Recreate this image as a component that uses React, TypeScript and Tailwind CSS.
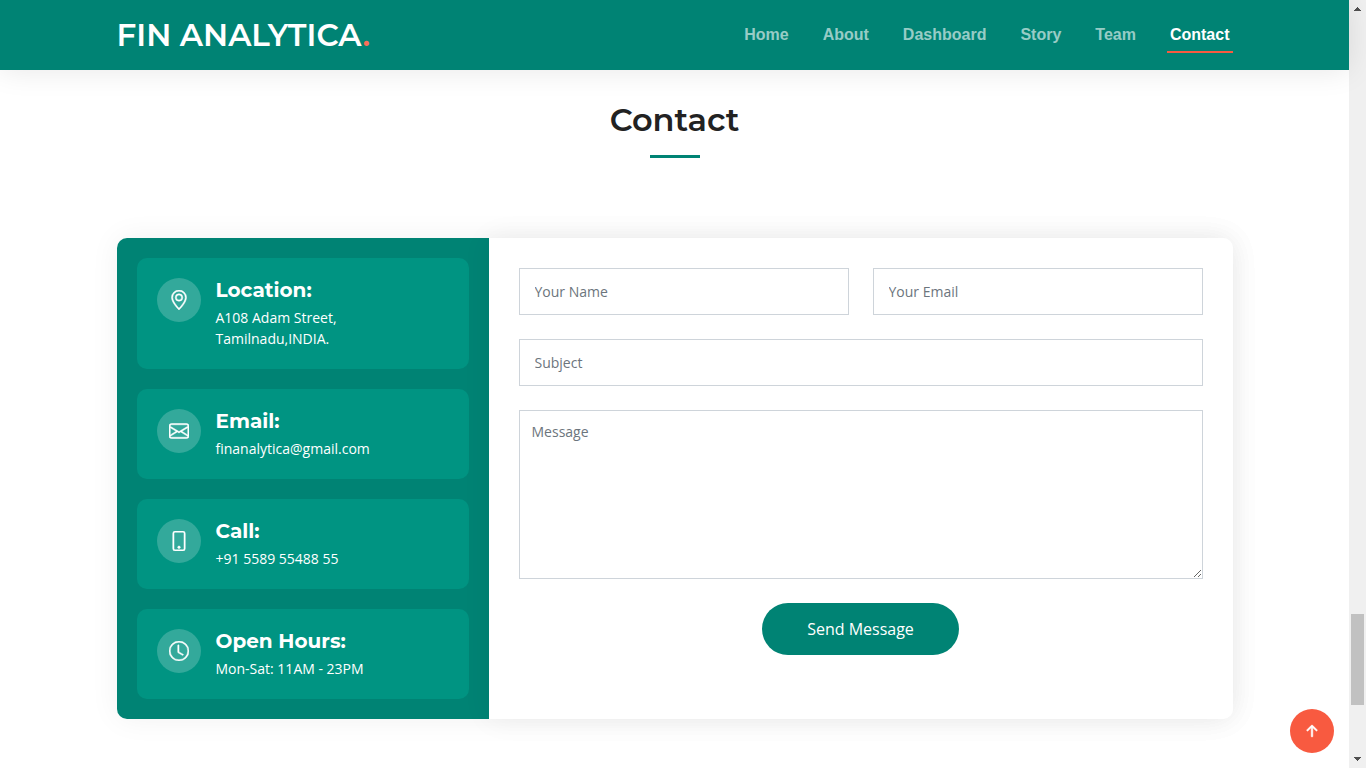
import type { ReactNode } from "react";
import { BsArrowUpShort, BsClock, BsEnvelope, BsGeoAlt, BsPhone } from "react-icons/bs";

const navItems = ["Home", "About", "Dashboard", "Story", "Team", "Contact"];

const headingFont = "font-['Montserrat','Inter',sans-serif]";

function Header() {
  return (
    <header className="relative z-10 h-[70px] shrink-0 bg-[#008374] shadow-[0_0_30px_rgba(0,0,0,0.1)]">
      <div className="mx-auto flex h-full max-w-[1140px] items-center justify-between px-3">
        <a href="#home" className={`${headingFont} text-[31px] leading-9 font-semibold text-white`}>
          FIN ANALYTICA<span className="text-[#f96f59]">.</span>
        </a>
        <nav aria-label="Main">
          <ul className="flex gap-7 font-['Liberation_Sans',Arial,sans-serif] text-base font-bold">
            {navItems.map((item) => (
              <li key={item}>
                <a
                  href={`#${item.toLowerCase()}`}
                  aria-current={item === "Contact" ? "page" : undefined}
                  className="block border-b-2 border-transparent px-[3px] pt-1.5 pb-1 text-white/60 aria-[current=page]:border-[#f85a40] aria-[current=page]:text-white"
                >
                  {item}
                </a>
              </li>
            ))}
          </ul>
        </nav>
      </div>
    </header>
  );
}

function InfoItem({ icon, title, children }: { icon: ReactNode; title: string; children: ReactNode }) {
  return (
    <div className="flex gap-[15px] rounded-[10px] bg-[#009482] p-5 text-white">
      <div className="flex size-11 shrink-0 items-center justify-center rounded-full bg-white/20 text-xl [&>svg]:stroke-[0.4]">
        {icon}
      </div>
      <div>
        <h3 className={`${headingFont} mb-[5px] text-xl leading-6 font-bold`}>{title}</h3>
        <p className="text-sm leading-[21px]">{children}</p>
      </div>
    </div>
  );
}

const fieldStyle =
  "block w-full border border-[#ced4da] bg-white text-sm leading-[21px] text-[#212529] outline-none placeholder:text-[#6c757d] focus:border-[#008374]";

function ContactForm() {
  return (
    <form
      className="w-2/3 rounded-r-[10px] bg-white p-[30px] shadow-[0_0_30px_rgba(0,0,0,0.06)]"
      onSubmit={(event) => event.preventDefault()}
    >
      <div className="grid grid-cols-2 gap-6">
        <input type="text" aria-label="Your Name" placeholder="Your Name" className={`${fieldStyle} px-[15px] py-3`} />
        <input type="email" aria-label="Your Email" placeholder="Your Email" className={`${fieldStyle} px-[15px] py-3`} />
        <input type="text" aria-label="Subject" placeholder="Subject" className={`${fieldStyle} col-span-2 px-[15px] py-3`} />
        <textarea
          aria-label="Message"
          placeholder="Message"
          className={`${fieldStyle} col-span-2 h-[169px] resize-y px-3 py-2.5`}
        />
      </div>
      <div className="mt-6 text-center">
        <button type="submit" className="rounded-full bg-[#008374] px-[45px] py-3.5 text-base text-white">
          Send Message
        </button>
      </div>
    </form>
  );
}

function ScrollRail() {
  return (
    <div aria-hidden="true" className="flex w-[17px] shrink-0 flex-col items-center bg-[#f0f0f0] py-[7px]">
      <svg width="7" height="4" viewBox="0 0 7 4" fill="#505050" shapeRendering="crispEdges">
        <path d="M3 0h1v1h1v1h1v1h1v1H0V3h1V2h1V1h1z" />
      </svg>
      <div className="grow-[603]" />
      <div className="w-[13px] grow-[91] bg-[#c1c1c1]" />
      <div className="grow-[52]" />
      <svg width="7" height="4" viewBox="0 0 7 4" fill="#505050" shapeRendering="crispEdges">
        <path d="M0 0h7v1H6v1H5v1H4v1H3V3H2V2H1V1H0z" />
      </svg>
    </div>
  );
}

export default function App() {
  return (
    <div className="flex h-screen bg-white font-['Open_Sans',sans-serif]">
      <div className="flex min-w-0 flex-1 flex-col">
        <Header />
        <main className="min-h-0 flex-1 overflow-hidden">
          <section id="contact" className="mx-auto max-w-[1140px] px-3 pt-[30px] pb-12">
            <div className="mb-20 flex flex-col items-center gap-4">
              <h2 className={`${headingFont} text-[32px] leading-[39px] font-semibold text-[#222222]`}>Contact</h2>
              <div className="h-[3px] w-[50px] bg-[#008374]" />
            </div>
            <div className="flex rounded-[10px] shadow-[0_0_30px_rgba(0,0,0,0.06)]">
              <div className="flex w-1/3 flex-col gap-5 rounded-l-[10px] bg-[#008374] p-5">
                <InfoItem icon={<BsGeoAlt />} title="Location:">
                  A108 Adam Street,
                  <br />
                  Tamilnadu,INDIA.
                </InfoItem>
                <InfoItem icon={<BsEnvelope />} title="Email:">
                  finanalytica@gmail.com
                </InfoItem>
                <InfoItem icon={<BsPhone />} title="Call:">
                  +91 5589 55488 55
                </InfoItem>
                <InfoItem icon={<BsClock />} title="Open Hours:">
                  Mon-Sat: 11AM - 23PM
                </InfoItem>
              </div>
              <ContactForm />
            </div>
          </section>
        </main>
      </div>
      <ScrollRail />
      <a
        href="#home"
        aria-label="Back to top"
        className="fixed right-8 bottom-[15px] z-20 flex size-11 items-center justify-center rounded-full bg-[#f85a40] text-2xl text-white [&>svg]:stroke-[0.4]"
      >
        <BsArrowUpShort />
      </a>
    </div>
  );
}
